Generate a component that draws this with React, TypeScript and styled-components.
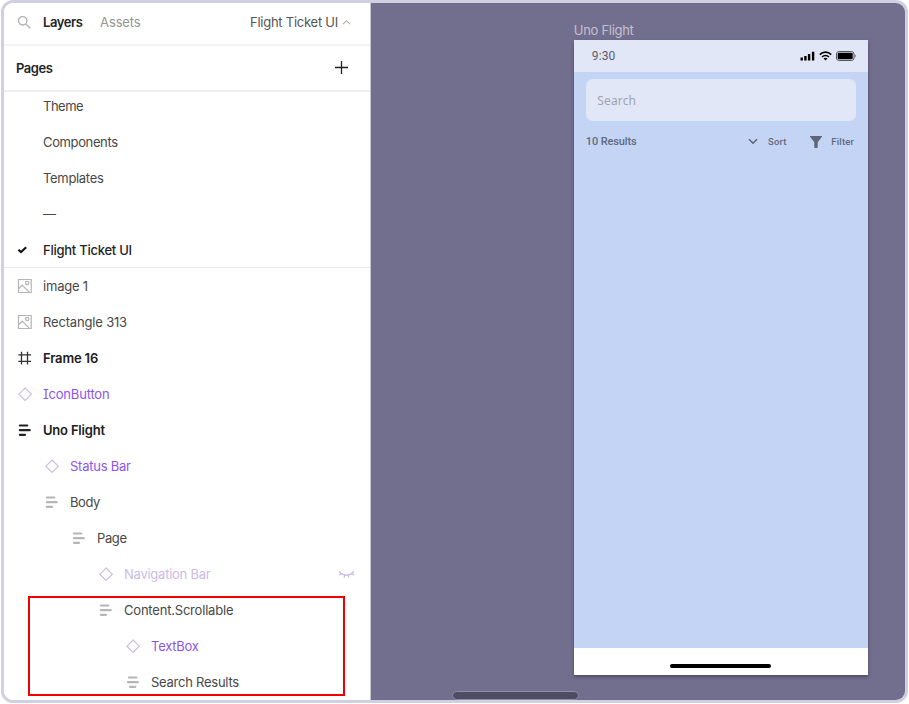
import React from 'react';
import styled, { createGlobalStyle } from 'styled-components';

const GlobalStyle = createGlobalStyle`
  * { box-sizing: border-box; }
  body { margin: 0; background: #fff; font-family: Inter, sans-serif; overflow: hidden; }
  svg { display: block; flex: none; }
`;

const Window = styled.main`
  position: relative;
  display: flex;
  width: 907px;
  height: 703px;
  margin-left: 1px;
  border: 3px solid #d1cfe2;
  border-radius: 12px;
  overflow: hidden;
`;

const Sidebar = styled.aside`
  width: 367px;
  flex: none;
  background: #fff;
  border-right: 1px solid #c6c4d2;
  color: #333;
  font-size: 13px;
`;

const TabBar = styled.header`
  display: flex;
  align-items: center;
  height: 43px;
  padding: 0 19px 3px 13px;
  border-bottom: 2px solid #f3f3f3;
`;

const Tab = styled.span<{ $active?: boolean }>`
  margin-left: ${p => (p.$active ? 11 : 17.5)}px;
  color: ${p => (p.$active ? '#252525' : '#949494')};
  font-weight: ${p => (p.$active ? 600 : 400)};
  letter-spacing: ${p => (p.$active ? -0.4 : -0.15)}px;
`;

const FileName = styled.span`
  margin-left: auto;
  margin-right: 4px;
  color: #555;
  letter-spacing: -0.25px;
`;

const PagesHeader = styled.div`
  display: flex;
  align-items: center;
  justify-content: space-between;
  height: 46px;
  padding: 0 22px 1px 12px;
  border-bottom: 2px solid #eee;
  color: #252525;
  font-weight: 600;
  letter-spacing: -0.45px;
`;

const PageList = styled.div`
  margin-top: -4px;
  border-bottom: 1px solid #e9e9e9;
  height: 180px;
`;

type Tone = 'normal' | 'strong' | 'active' | 'component' | 'hidden';
const tones: Record<Tone, string> = {
  normal: '#484848', strong: '#202020', active: '#252525', component: '#8e55ee', hidden: '#c9bce5',
};

const Row = styled.div<{ $depth?: number; $tone?: Tone; $tracking?: number }>`
  display: flex;
  align-items: center;
  height: 36px;
  padding-left: ${p => 12 + (p.$depth ?? 0) * 27}px;
  padding-right: 15px;
  color: ${p => tones[p.$tone ?? 'normal']};
  font-weight: ${p => (p.$tone === 'strong' ? 600 : p.$tone === 'active' ? 500 : 400)};
  letter-spacing: ${p => p.$tracking ?? -0.25}px;
  white-space: nowrap;
`;

const IconSlot = styled.span`
  display: flex;
  width: 27px;
  flex: none;
`;

const SerifI = styled.span`
  font-feature-settings: 'cv08';
`;

const RowEnd = styled.span`
  margin-left: auto;
`;

const Highlight = styled.div`
  position: absolute;
  left: 24px;
  top: 593px;
  width: 317px;
  height: 100px;
  border: 2px solid #f20000;
`;

const Canvas = styled.section`
  position: relative;
  flex: 1;
  padding: 18.7px 0 0 202.8px;
  background: #726e8d;
`;

const FrameLabel = styled.div`
  height: 18px;
  line-height: 17px;
  font-size: 13px;
  letter-spacing: -0.3px;
  color: #c3c0d0;
`;

const Phone = styled.div`
  display: flex;
  flex-direction: column;
  width: 293.8px;
  height: 635px;
  background: #c4d4f5;
  box-shadow: 0 2px 3px rgba(40, 35, 60, 0.5);
`;

const StatusBar = styled.div`
  display: flex;
  align-items: center;
  height: 32.6px;
  padding: 0 12px 0 18px;
  background: #e2e7f7;
  color: #5a5d68;
  font: 12px Roboto, sans-serif;
  letter-spacing: 0.1px;
`;

const StatusIcons = styled.div`
  display: flex;
  align-items: center;
  gap: 4px;
  margin-left: auto;
`;

const SearchBox = styled.div`
  height: 42px;
  margin: 6.5px 12px 0;
  padding: 0 11.5px;
  border-radius: 7px;
  background: #e2e7f7;
  color: #9fa3b4;
  font: 12px/43px 'Noto Sans', sans-serif;
  letter-spacing: 0.15px;
`;

const ResultsBar = styled.div`
  display: flex;
  align-items: center;
  height: 42px;
  padding: 0 13.5px 0 12px;
  color: #616a7b;
  font: 500 11px Roboto, sans-serif;
  letter-spacing: -0.12px;
`;

const Action = styled.span<{ $gap: number; $before: number }>`
  display: flex;
  align-items: center;
  gap: ${p => p.$gap}px;
  margin-left: ${p => (p.$before ? `${p.$before}px` : 'auto')};
  font-size: 9.5px;
  letter-spacing: 0.2px;
`;

const HomeArea = styled.div`
  display: flex;
  justify-content: center;
  height: 26.5px;
  margin-top: auto;
  padding-top: 16px;
  background: #fff;
`;

const HomeBar = styled.div`
  width: 101px;
  height: 4px;
  border-radius: 2px;
  background: #000;
`;

const ScrollThumb = styled.div`
  position: absolute;
  left: 81px;
  bottom: 0;
  width: 127px;
  height: 9px;
  border: 1px solid #918da6;
  border-radius: 5px;
  background: #4f4b63;
`;

const Check = () => (
  <svg width="14" height="14" viewBox="0 0 14 14" fill="none" stroke="#111" strokeWidth="2"><path d="M2.4 6.7 5 9.1 10.2 4.2" /></svg>
);
const ImageIcon = () => (
  <svg width="16" height="16" viewBox="0 0 16 16" fill="none" stroke="#b5b5b5" strokeWidth="1.2">
    <path d="M2.5 1.5h12.7v13H2.5zM2.8 10.5 6.2 7.2l7 7" /><circle cx="11.2" cy="5" r="1.7" />
  </svg>
);
const HashIcon = () => (
  <svg width="16" height="16" viewBox="0 0 16 16" fill="none" stroke="#333" strokeWidth="1.3"><path d="M5.5 1.8v12.6M11.5 1.8v12.6M2.3 4.9h12.8M2.3 11.3h12.8" /></svg>
);
const Diamond = () => (
  <svg width="17" height="16" viewBox="0 0 17 16" fill="none" stroke="#cbbde6" strokeWidth="1.2"><path d="m9.1 2 6.2 6.2-6.2 6.2-6.2-6.2z" /></svg>
);
const Lines = ({ dark, centered }: { dark?: boolean; centered?: boolean }) => (
  <svg width="16" height="16" viewBox="0 0 16 16" stroke={dark ? '#222' : '#b6b6b6'} strokeWidth="2.2" strokeLinecap="round">
    <path d={centered ? 'M5 3.5h7.4M4 8.2h9.8M6 12.8h5.4' : 'M3.9 3.5h7.4M3.9 8.2h9.8M3.9 12.8h5.1'} />
  </svg>
);
const ClosedEye = () => (
  <svg width="17" height="10" viewBox="0 0 17 10" fill="none" stroke="#c8bce4" strokeWidth="1.2">
    <path d="M1.2 2.5c3.8 4.7 10.8 4.7 14.6 0M3.4 4.4 1.2 6.2M6.8 5.9 6.2 8.7M10.2 5.9l.6 2.8M13.6 4.4l2.2 1.8" />
  </svg>
);

type Layer = { name: string; label?: React.ReactNode; icon: React.ReactNode; depth?: number; tone?: Tone; tracking?: number; end?: React.ReactNode };
const pages: [string, number][] = [['Theme', -0.5], ['Components', -0.37], ['Templates', -0.32], ['—', 0]];
const layers: Layer[] = [
  { name: 'image 1', icon: <ImageIcon />, tracking: -0.2 },
  { name: 'Rectangle 313', icon: <ImageIcon />, tracking: -0.17 },
  { name: 'Frame 16', icon: <HashIcon />, tone: 'strong', tracking: -0.15 },
  { name: 'IconButton', label: <span><SerifI>I</SerifI>conButton</span>, icon: <Diamond />, tone: 'component', tracking: -0.2 },
  { name: 'Uno Flight', icon: <Lines dark />, tone: 'strong', tracking: -0.2 },
  { name: 'Status Bar', icon: <Diamond />, tone: 'component', depth: 1 },
  { name: 'Body', icon: <Lines />, depth: 1, tracking: -0.4 },
  { name: 'Page', icon: <Lines />, depth: 2, tracking: -0.4 },
  { name: 'Navigation Bar', icon: <Diamond />, tone: 'hidden', depth: 3, end: <ClosedEye /> },
  { name: 'Content.Scrollable', icon: <Lines />, depth: 3, tracking: -0.2 },
  { name: 'TextBox', icon: <Diamond />, tone: 'component', depth: 4 },
  { name: 'Search Results', icon: <Lines centered />, depth: 4 },
];

export default function App() {
  return (
    <>
      <GlobalStyle />
      <Window>
        <Sidebar>
          <TabBar>
            <svg width="15" height="15" viewBox="0 0 15 15" fill="none" stroke="#b0b0b0" strokeWidth="1.3"><circle cx="5.7" cy="5.8" r="4.2" /><path d="m8.8 8.9 4.6 4.4" /></svg>
            <Tab $active>Layers</Tab>
            <Tab>Assets</Tab>
            <FileName>Flight Ticket UI</FileName>
            <svg width="9" height="7" viewBox="0 0 9 7" fill="none" stroke="#b0b0b0" strokeWidth="1.1"><path d="M1 5.2 4.5 1.7 8 5.2" /></svg>
          </TabBar>
          <PagesHeader>
            Pages
            <svg width="13" height="13" viewBox="0 0 13 13" stroke="#222" strokeWidth="1.3"><path d="M6.5 0v13M0 6.5h13" /></svg>
          </PagesHeader>
          <PageList>
            {pages.map(([name, tracking]) => <Row key={name} $tracking={tracking}><IconSlot />{name}</Row>)}
            <Row $tone="active"><IconSlot><Check /></IconSlot>Flight Ticket UI</Row>
          </PageList>
          {layers.map(l => (
            <Row key={l.name} $depth={l.depth} $tone={l.tone} $tracking={l.tracking}>
              <IconSlot>{l.icon}</IconSlot>{l.label ?? l.name}{l.end && <RowEnd>{l.end}</RowEnd>}
            </Row>
          ))}
        </Sidebar>
        <Canvas>
          <FrameLabel>Uno Flight</FrameLabel>
          <Phone>
            <StatusBar>
              9:30
              <StatusIcons>
                <svg width="15" height="10" viewBox="0 0 15 10"><path d="M.5 6.6h2.4v3H.5zM4.2 5h2.4v4.6H4.2zM7.9 3h2.4v6.6H7.9zM11.9.7h2.4v8.9h-2.4z" /></svg>
                <svg width="13" height="10" viewBox="0 0 13 10" fill="none" stroke="#000" strokeWidth="1.6"><path d="M.8 3.6c3.2-3.3 8.2-3.3 11.4 0M3 6c2-2 5-2 7 0" /><path d="M4.5 7.4c1.2-1 2.8-1 4 0l-2 2.2z" fill="#000" stroke="none" /></svg>
                <svg width="20" height="10" viewBox="0 0 20 10"><rect x=".5" y=".5" width="17.5" height="9" rx="2.5" fill="none" stroke="#555" /><rect x="1.7" y="1.7" width="15" height="6.6" rx="1.4" /><path d="M18.8 3.5c1.2.4 1.2 2.6 0 3z" fill="#555" /></svg>
              </StatusIcons>
            </StatusBar>
            <SearchBox>Search</SearchBox>
            <ResultsBar>
              10 Results
              <Action $gap={10} $before={0}>
                <svg width="10" height="7" viewBox="0 0 10 7" fill="none" stroke="#5d6778" strokeWidth="1.5"><path d="m1 1.2 4 4 4-4" /></svg>
                Sort
              </Action>
              <Action $gap={9} $before={23.5}>
                <svg width="12" height="12" viewBox="0 0 12 12" fill="#5d6778"><path d="M.6 0h10.8c.6 0 .8.5.4 1L7.7 6.2V11c0 .6-.4 1-.9 1H5.3c-.6 0-1-.4-1-1V6.2L.2 1C-.2.5 0 0 .6 0z" /></svg>
                Filter
              </Action>
            </ResultsBar>
            <HomeArea><HomeBar /></HomeArea>
          </Phone>
          <ScrollThumb />
        </Canvas>
        <Highlight />
      </Window>
    </>
  );
}
